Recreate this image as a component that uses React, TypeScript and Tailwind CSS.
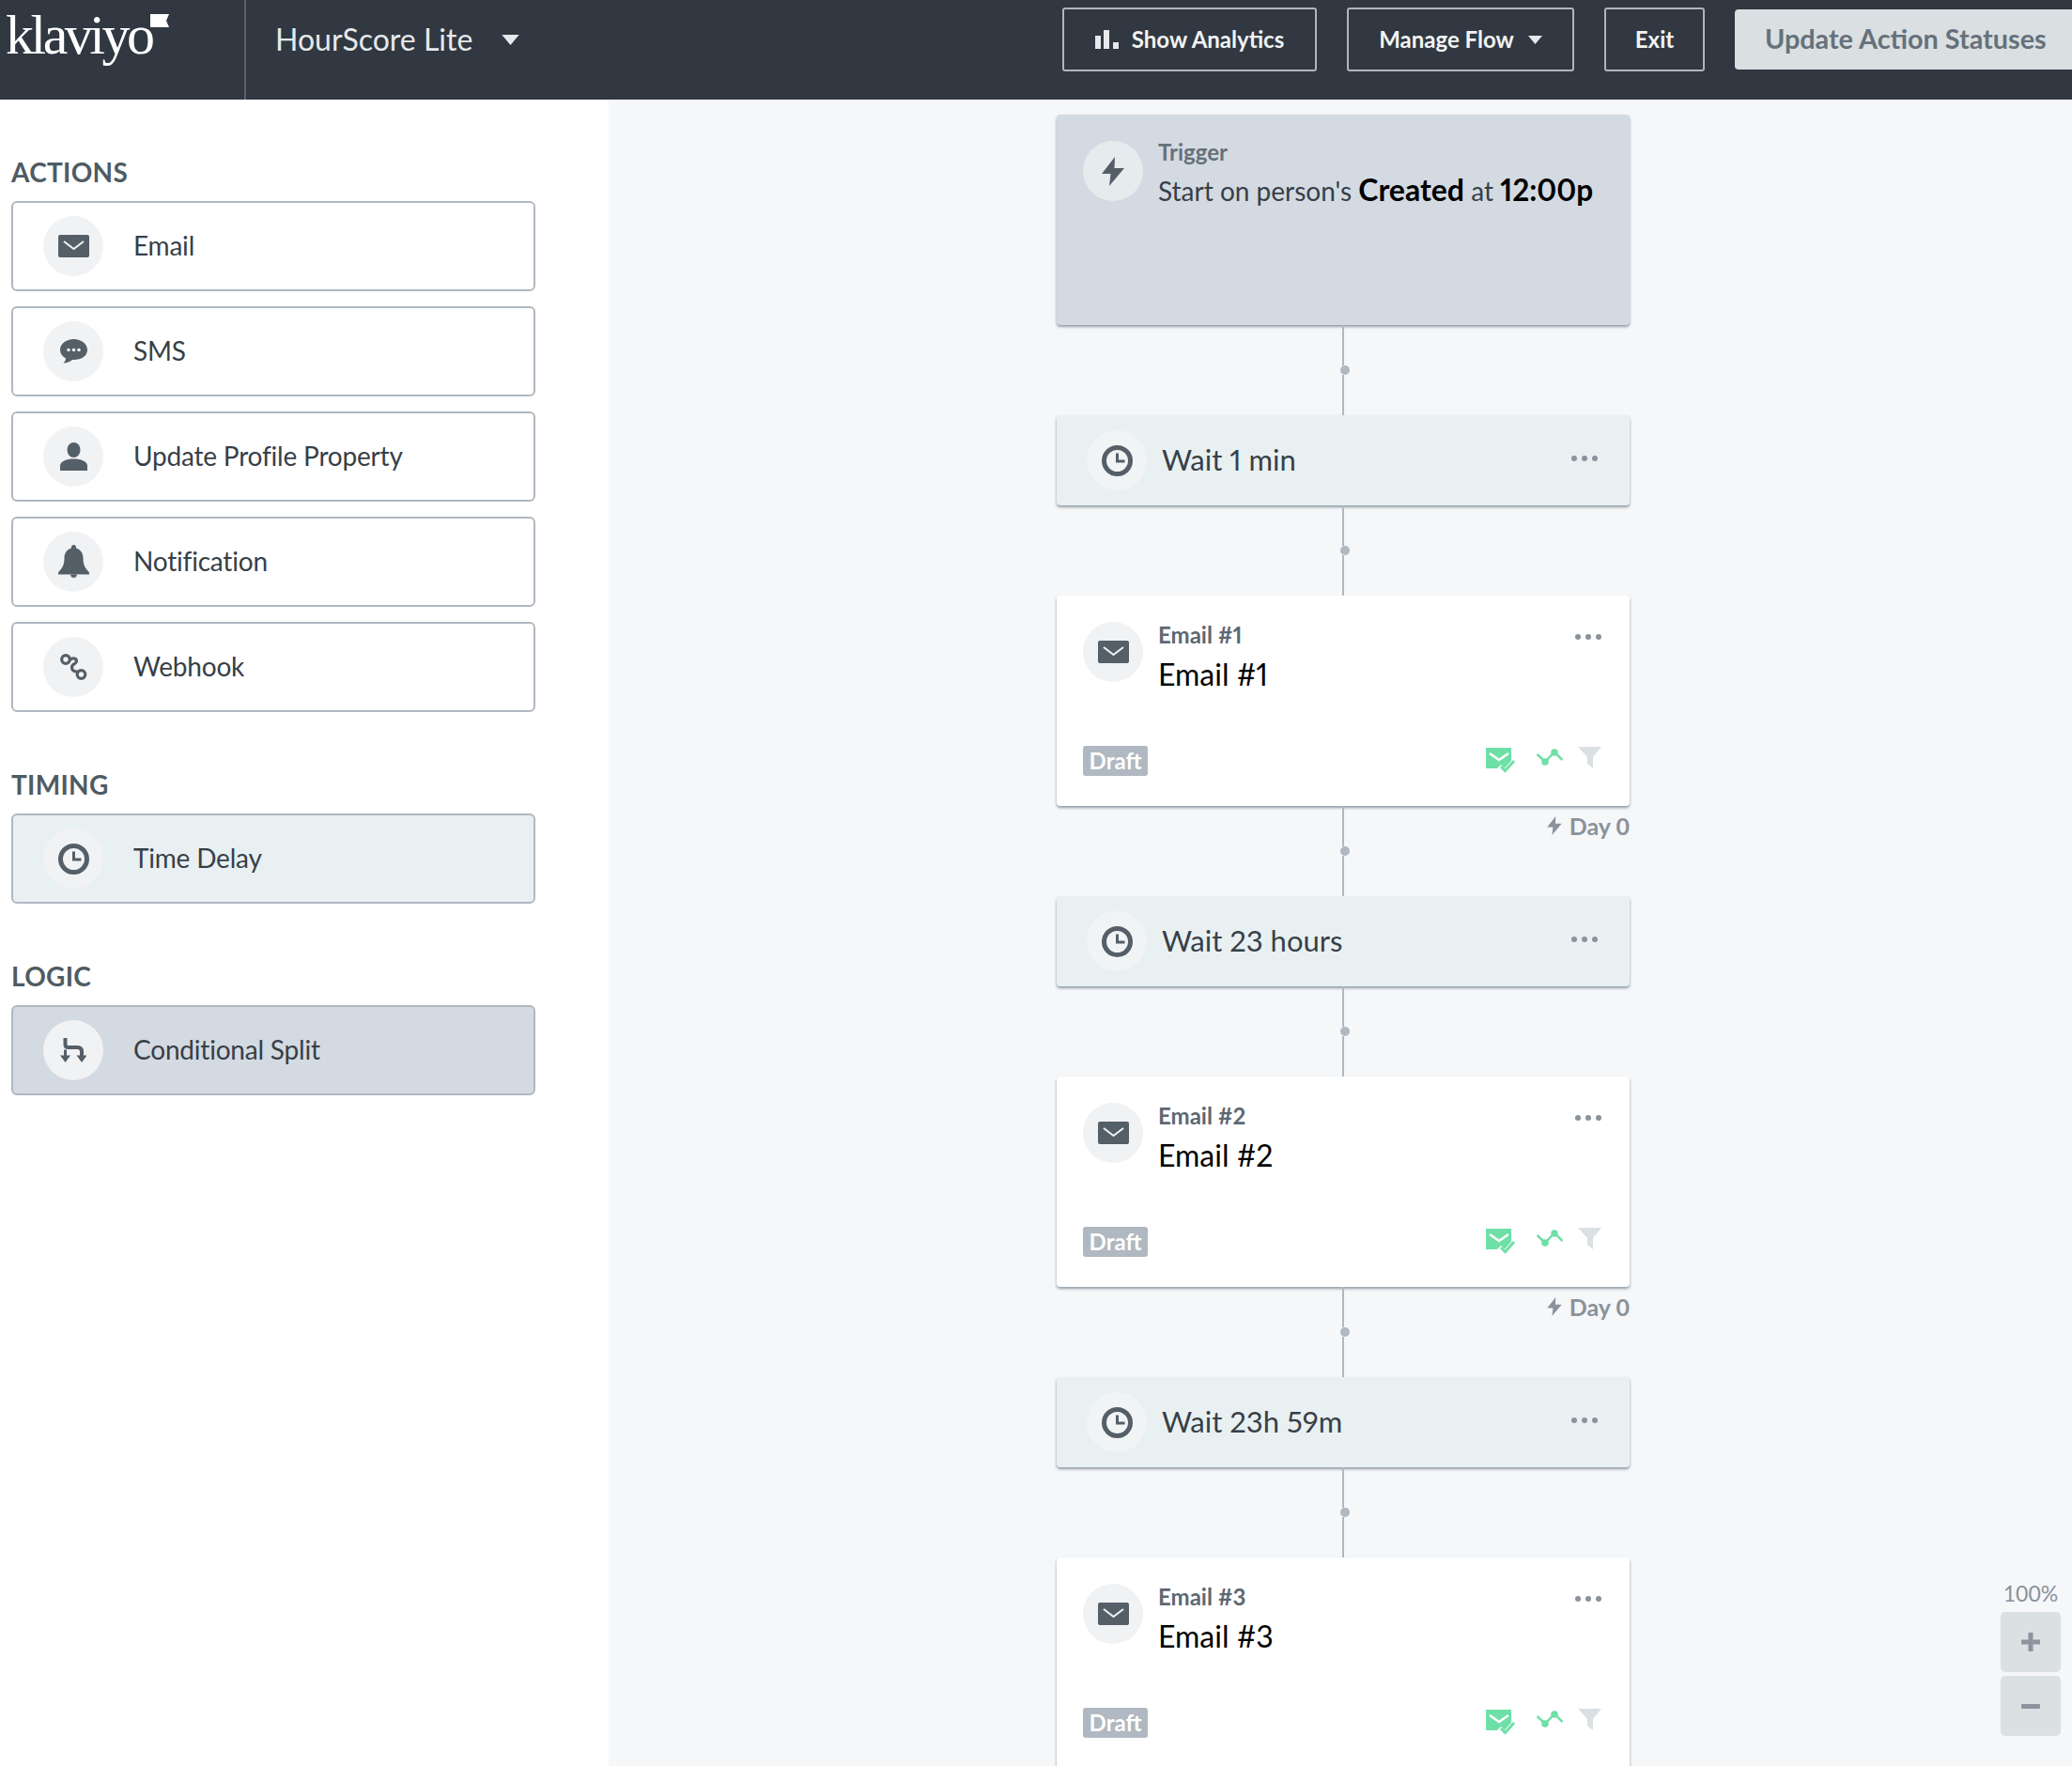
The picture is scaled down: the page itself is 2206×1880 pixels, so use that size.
import type { ReactNode } from "react";

function MailIcon({ flap = "#f1f2f4" }: { flap?: string }) {
  return (
    <svg width="33" height="24" viewBox="0 0 33 24">
      <rect width="33" height="24" rx="2" fill="#545f68" />
      <path d="M6 7l10.5 8L27 7" fill="none" stroke={flap} strokeWidth="2" />
    </svg>
  );
}

function SmsIcon() {
  return (
    <svg width="29" height="26" viewBox="0 0 29 26">
      <path d="M14.5 0C6.5 0 0 5 0 11.5c0 4 2.400 7 6 9 0 2-1 3.500-2.500 5 3.500 0 7-1.500 9.500-3.500h1.500C22.500 22 29 18 29 11.500 29 5 22.500 0 14.500 0z" fill="#545f68" />
      <circle cx="9" cy="11.500" r="1.800" fill="#f1f2f4" />
      <circle cx="14.500" cy="11.500" r="1.800" fill="#f1f2f4" />
      <circle cx="20" cy="11.500" r="1.800" fill="#f1f2f4" />
    </svg>
  );
}

function PersonIcon() {
  return (
    <svg width="29" height="30" viewBox="0 0 29 30">
      <ellipse cx="14.500" cy="8" rx="7" ry="8" fill="#545f68" />
      <path d="M0 30v-5c0-5 7-7.500 14.500-7.500S29 20 29 25v5z" fill="#545f68" />
    </svg>
  );
}

function BellIcon() {
  return (
    <svg width="33" height="36" viewBox="0 0 33 36">
      <path d="M16.500 0c1.500 0 2.500 1 2.500 2.500v1c5 1.500 7.500 5.500 7.500 10.500 0 8 2.500 11 6.500 15.500v2H0v-2c4-4.500 6.500-7.500 6.500-15.500C6.500 9 9 5 14 3.500v-1C14 1 15 0 16.500 0z" fill="#545f68" />
      <path d="M12.500 31.500a4 4 0 0 0 8 0" fill="#545f68" stroke="#f1f2f4" strokeWidth="1" />
    </svg>
  );
}

function WebhookIcon() {
  return (
    <svg width="29" height="29" viewBox="0 0 29 29" fill="none" stroke="#545f68" strokeWidth="3.200">
      <circle cx="6" cy="6" r="4.300" />
      <circle cx="22.500" cy="22" r="4.300" />
      <path d="M10 7c2-3 7.500-3 7.500 1 0 3-5 2.500-5 6.500 0 4 4 4.500 6 4.500" />
    </svg>
  );
}

function ClockIcon() {
  return (
    <svg width="33" height="33" viewBox="0 0 33 33" fill="none" stroke="#545f68">
      <circle cx="16.500" cy="16.500" r="14" strokeWidth="5" />
      <path d="M16.500 8.500v8.500h8" strokeWidth="3" />
    </svg>
  );
}

function SplitIcon() {
  return (
    <svg width="28" height="26" viewBox="0 0 28 26" fill="#545f68">
      <path d="M5.500 0v7q0 3 3 3h10q4.500 0 4.500 4.500V21" fill="none" stroke="#545f68" strokeWidth="4" />
      <path d="M5.500 12.500V21" fill="none" stroke="#545f68" strokeWidth="3" />
      <path d="M0 18.500h11L5.500 26zM17.500 18.500h11L23 26z" />
    </svg>
  );
}

function BoltIcon({ color = "#545f68", w = 24, h = 31 }: { color?: string; w?: number; h?: number }) {
  return (
    <svg width={w} height={h} viewBox="0 0 24 31">
      <path d="M14 0L0 18h9.500L8 31l16-19h-10.500z" fill={color} />
    </svg>
  );
}

function Caret({ w, h, color }: { w: number; h: number; color: string }) {
  return (
    <svg width={w} height={h} viewBox="0 0 10 6">
      <path d="M0 0h10L5 6z" fill={color} />
    </svg>
  );
}

function IconCircle({ children, className = "bg-[#f1f2f4]" }: { children: ReactNode; className?: string }) {
  return (
    <div className={`flex h-[64px] w-[64px] shrink-0 items-center justify-center rounded-full ${className}`}>
      {children}
    </div>
  );
}

function SideItem({ icon, label, className = "bg-white" }: { icon: ReactNode; label: string; className?: string }) {
  return (
    <div className={`flex h-[96px] w-[558px] items-center rounded-[6px] border-2 border-[#b0b8c1] pl-[32px] ${className}`}>
      <IconCircle>{icon}</IconCircle>
      <span className="mb-[2px] ml-[32px] text-[28px] tracking-[-0.2px] text-[#373f47]">{label}</span>
    </div>
  );
}

function SideLabel({ children, className = "" }: { children: string; className?: string }) {
  return <div className={`mb-[15px] text-[28px] leading-[32px] font-bold tracking-[0.3px] text-[#4f5b63] ${className}`}>{children}</div>;
}

function Dots() {
  return (
    <div className="flex gap-[5px]">
      <span className="h-[6px] w-[6px] rounded-full bg-[#8a929b]" />
      <span className="h-[6px] w-[6px] rounded-full bg-[#8a929b]" />
      <span className="h-[6px] w-[6px] rounded-full bg-[#8a929b]" />
    </div>
  );
}

function Connector({ day }: { day?: boolean }) {
  return (
    <div className="relative flex h-[96px] flex-col items-center">
      <div className="w-[2px] flex-1 bg-[#b0b8c1]" />
      <div className="ml-[3px] h-[10px] w-[10px] rounded-full bg-[#b0b8c1]" />
      <div className="w-[2px] flex-1 bg-[#b0b8c1]" />
      {day && (
        <div className="absolute top-[8px] right-0 flex items-center gap-[8px] text-[25px] leading-[26px] font-bold text-[#8a929b]">
          <BoltIcon color="#8a929b" w={16} h={20} />
          Day 0
        </div>
      )}
    </div>
  );
}

function WaitCard({ label }: { label: string }) {
  return (
    <div className="flex h-[96px] items-center rounded-[4px] bg-[#e9f0f2] pr-[34px] pl-[32px] shadow-[0_2px_3px_rgba(80,95,110,0.6)]">
      <IconCircle className="bg-[#f1f4f5]">
        <ClockIcon />
      </IconCircle>
      <span className="mb-[2px] ml-[16px] text-[31px] text-[#373f47] proportional-nums">{label}</span>
      <div className="mt-[-4px] ml-auto">
        <Dots />
      </div>
    </div>
  );
}

function EmailCard({ label }: { label: string }) {
  return (
    <div className="h-[224px] rounded-[4px] bg-white pt-[28px] pr-[30px] pl-[28px] shadow-[0_2px_3px_rgba(80,95,110,0.6)]">
      <div className="flex">
        <IconCircle>
          <MailIcon />
        </IconCircle>
        <div className="ml-[16px] flex-1">
          <div className="text-[24px] leading-[28px] font-bold text-[#5d6872] proportional-nums">{label}</div>
          <div className="mt-[8px] text-[32px] leading-[40px] text-black proportional-nums">{label}</div>
        </div>
        <div className="mt-[13px]">
          <Dots />
        </div>
      </div>
      <div className="mt-[56px] flex items-start">
        <div className="flex h-[32px] w-[69px] items-center justify-center rounded-[3px] bg-[#b0b8c1] text-[24px] font-bold text-white">
          Draft
        </div>
        <div className="ml-auto flex items-start">
          <svg className="mt-[2px]" width="32" height="28" viewBox="0 0 32 28">
            <rect width="27" height="22" fill="#6fdfa8" />
            <path d="M4 6l10 7 10-7" fill="none" stroke="#fff" strokeWidth="2.500" />
            <path d="M14 20l6 6 11-12" fill="none" stroke="#fff" strokeWidth="6" />
            <path d="M16 20l4.500 4.500L30 14" fill="none" stroke="#6fdfa8" strokeWidth="3" />
          </svg>
          <svg className="mt-[3px] ml-[22px]" width="28" height="19" viewBox="0 0 28 19" fill="none" stroke="#6fdfa8" strokeWidth="2.500">
            <path d="M0.500 6l8.500 8L19 3.500l8.500 8.500" />
            <circle cx="9" cy="14" r="3.800" fill="#6fdfa8" stroke="none" />
            <circle cx="19" cy="4" r="3.800" fill="#6fdfa8" stroke="none" />
          </svg>
          <svg className="mt-[1px] ml-[16px]" width="25" height="23" viewBox="0 0 25 23">
            <path d="M0 0h25l-9 11v12l-6-5v-7z" fill="#dbe0e3" />
          </svg>
        </div>
      </div>
    </div>
  );
}

export default function App() {
  return (
    <div className="flex h-[1880px] w-[2206px] flex-col overflow-hidden bg-white font-['Lato',sans-serif]">
      {/* Top bar */}
      <header className="flex h-[106px] shrink-0 items-start bg-[#313841]">
        <div className="relative flex h-full w-[262px] shrink-0 items-start border-r-2 border-[#59636c] pl-[6px]">
          <span className="mt-[3px] font-['Liberation_Serif',serif] text-[60px] leading-[68px] tracking-[-3.500px] text-white">klaviyo</span>
          <svg className="mt-[15px] ml-[-1px]" width="20" height="14" viewBox="0 0 20 14">
            <path d="M0 0h20l-3 7 3 7H0z" fill="#fff" />
          </svg>
        </div>
        <div className="flex h-[84px] items-center pl-[31px] text-[32px] text-[#e6e9eb]">
          HourScore Lite
          <span className="ml-[31px]">
            <Caret w={19} h={11} color="#e6e9eb" />
          </span>
        </div>
        <div className="ml-auto flex gap-[32px] pt-[8px]">
          <div className="flex h-[68px] w-[271px] items-center justify-center gap-[14px] rounded-[3px] border-2 border-[#aeb6bf] text-[24px] font-bold text-[#f1f3f4]">
            <svg width="25" height="20" viewBox="0 0 25 20" fill="#e6e9eb">
              <rect y="6" width="6" height="14" />
              <rect x="9" width="6" height="20" />
              <rect x="19" y="13" width="6" height="7" />
            </svg>
            Show Analytics
          </div>
          <div className="flex h-[68px] w-[242px] items-center justify-center gap-[15px] rounded-[3px] border-2 border-[#aeb6bf] text-[24px] font-bold text-[#f1f3f4]">
            Manage Flow
            <Caret w={15} h={9} color="#e6e9eb" />
          </div>
          <div className="flex h-[68px] w-[107px] items-center justify-center rounded-[3px] border-2 border-[#aeb6bf] text-[24px] font-bold text-[#f1f3f4]">
            Exit
          </div>
          <div className="mt-[2px] flex h-[64px] w-[359px] items-center rounded-l-[4px] bg-[#dadfe1] pl-[32px] text-[28.800px] font-bold text-[#65717b]">
            Update Action Statuses
          </div>
        </div>
      </header>

      <div className="relative flex flex-1 overflow-hidden">
        {/* Sidebar */}
        <aside className="w-[648px] shrink-0 bg-white pt-[61px] pl-[12px]">
          <SideLabel>ACTIONS</SideLabel>
          <div className="flex flex-col gap-[16px]">
            <SideItem icon={<MailIcon />} label="Email" />
            <SideItem icon={<SmsIcon />} label="SMS" />
            <SideItem icon={<PersonIcon />} label="Update Profile Property" />
            <SideItem icon={<BellIcon />} label="Notification" />
            <SideItem icon={<WebhookIcon />} label="Webhook" />
          </div>
          <SideLabel className="mt-[61px]">TIMING</SideLabel>
          <SideItem icon={<ClockIcon />} label="Time Delay" className="bg-[#e9f0f2]" />
          <SideLabel className="mt-[61px]">LOGIC</SideLabel>
          <SideItem icon={<SplitIcon />} label="Conditional Split" className="bg-[#d3dae2]" />
        </aside>

        {/* Flow canvas */}
        <main className="flex-1 bg-[#f5f7f9] pt-[16px] pl-[477px]">
          <div className="w-[610px]">
            <div className="flex h-[224px] rounded-[4px] bg-[#d3dae2] pt-[28px] pl-[28px] shadow-[0_2px_3px_rgba(80,95,110,0.6)]">
              <IconCircle className="bg-[#e6ebee]">
                <BoltIcon />
              </IconCircle>
              <div className="ml-[16px]">
                <div className="mt-[-2px] text-[24px] leading-[28px] font-bold text-[#65717b]">Trigger</div>
                <div className="mt-[8px] text-[28px] leading-[36px] text-[#373f47]">
                  Start on person's <span className="text-[32px] font-bold text-black">Created</span> at{" "}
                  <span className="text-[31.500px] font-bold text-black proportional-nums">12:00p</span>
                </div>
              </div>
            </div>
            <Connector />
            <WaitCard label="Wait 1 min" />
            <Connector />
            <EmailCard label="Email #1" />
            <Connector day />
            <WaitCard label="Wait 23 hours" />
            <Connector />
            <EmailCard label="Email #2" />
            <Connector day />
            <WaitCard label="Wait 23h 59m" />
            <Connector />
            <EmailCard label="Email #3" />
          </div>
        </main>

        {/* Zoom controls */}
        <div className="absolute right-[12px] bottom-[32px] flex w-[64px] flex-col items-center gap-[4px]">
          <span className="mb-[2px] text-[23px] leading-[28px] whitespace-nowrap text-[#8a929b]">100%</span>
          <div className="flex h-[64px] w-[64px] items-center justify-center rounded-[5px] bg-[#dbe0e3]">
            <svg width="20" height="20" viewBox="0 0 20 20">
              <path d="M7.500 0h5v7.500H20v5h-7.500V20h-5v-7.500H0v-5h7.500z" fill="#8d949d" />
            </svg>
          </div>
          <div className="flex h-[64px] w-[64px] items-center justify-center rounded-[5px] bg-[#dbe0e3]">
            <div className="h-[5px] w-[20px] rounded-[1px] bg-[#8d949d]" />
          </div>
        </div>
      </div>
    </div>
  );
}
